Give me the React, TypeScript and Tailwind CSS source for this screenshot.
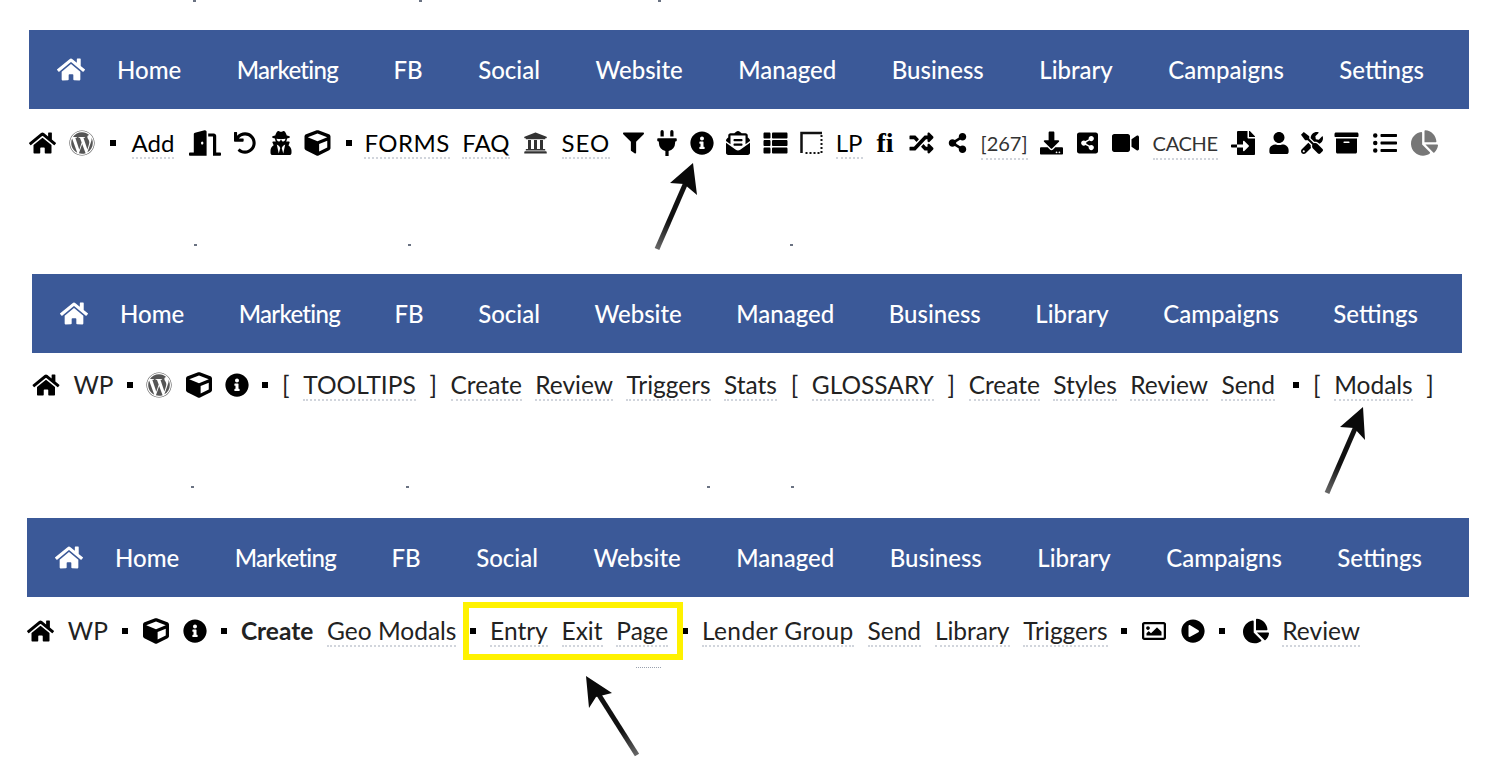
import React from "react";
import { FaArchive, FaChartPie, FaCube, FaDoorOpen, FaDownload, FaEnvelopeOpenText, FaFileImport, FaFilter, FaHome, FaInfoCircle, FaListUl, FaPlayCircle, FaPlug, FaRandom, FaRegImage, FaShareAlt, FaShareAltSquare, FaThList, FaTools, FaUndo, FaUniversity, FaUser, FaUserSecret, FaVideo, FaWordpress } from "react-icons/fa";

const navItems = ["Home", "Marketing", "FB", "Social", "Website", "Managed", "Business", "Library", "Campaigns", "Settings"];

const NavBar = ({ className, gap }: { className: string; gap: string }) => (
  <nav className={`flex h-[79px] shrink-0 items-center gap-[32px] bg-[#3b5998] pl-7 text-[24px] font-medium text-white ${className}`}>
    <FaHome className="h-[27px] w-[28px] shrink-0" />
    <div className={`flex items-center ${gap}`}>
      {navItems.map((item) => (
        <span key={item} className={item === "Marketing" ? "tracking-[-0.7px]" : ""}>
          {item}
        </span>
      ))}
    </div>
  </nav>
);

const Lnk = ({ children, className = "" }: { children: React.ReactNode; className?: string }) => (
  <span className={`shrink-0 border-b-2 border-dotted border-gray-300 leading-[29px] ${className}`}>{children}</span>
);

const Dot = ({ className = "" }: { className?: string }) => <span className={`h-[6px] w-[6px] shrink-0 bg-black ${className}`} />;

const Bracket = ({ children }: { children: React.ReactNode }) => <span className="w-2 shrink-0 text-center">{children}</span>;

// little stray marks left over from the screenshot crop
const Speck = ({ className }: { className: string }) => <span className={`absolute h-[2px] w-[3px] bg-gray-500 ${className}`} />;

const Arrow = ({ className, id, d, head, from, to }: { className: string; id: string; d: string; head: string; from: number[]; to: number[] }) => (
  <svg className={`absolute ${className}`} width="60" height="100" viewBox="0 0 60 100">
    <defs>
      <linearGradient id={id} gradientUnits="userSpaceOnUse" x1={from[0]} y1={from[1]} x2={to[0]} y2={to[1]}>
        <stop offset="0" stopColor="#666" />
        <stop offset="0.4" stopColor="#111" />
      </linearGradient>
    </defs>
    <path d={d} stroke={`url(#${id})`} strokeWidth="5" fill="none" />
    <path d={head} fill="#0a0a0a" />
  </svg>
);

export default function App() {
  return (
    <div className="relative flex h-[765px] w-[1500px] flex-col overflow-hidden bg-white font-['Lato','Open_Sans',sans-serif] text-[#222]">
      <NavBar className="ml-[29px] mr-[31px] mt-[30px]" gap="gap-x-[55.5px]" />
      <div className="ml-[29px] mt-[19px] flex h-[30px] items-center gap-[12.5px] text-[24px] text-black">
        <FaHome className="h-6 w-[27px] shrink-0" />
        <FaWordpress className="h-[26px] w-[26px] shrink-0 text-[#555]" />
        <Dot className="ml-[3px]" />
        <Lnk className="ml-[3px]">Add</Lnk>
        <FaDoorOpen className="ml-[2px] h-[26px] w-[32px] shrink-0" />
        <FaUndo className="h-[22px] w-6 shrink-0" />
        <FaUserSecret className="h-6 w-[22px] shrink-0" />
        <FaCube className="h-[26px] w-[27px] shrink-0" />
        <Dot className="ml-[2px]" />
        <Lnk><span className="tracking-[0.5px]">FORMS</span></Lnk>
        <Lnk>FAQ</Lnk>
        <FaUniversity className="ml-[1px] h-6 w-[25px] shrink-0 text-[#333]" />
        <Lnk className="ml-[1px]"><span className="tracking-[1px]">SEO</span></Lnk>
        <FaFilter className="h-[22px] w-[21px] shrink-0" />
        <FaPlug className="ml-[1px] h-[26px] w-[20px] shrink-0" />
        <FaInfoCircle className="h-6 w-6 shrink-0" />
        <FaEnvelopeOpenText className="h-6 w-6 shrink-0" />
        <FaThList className="h-6 w-[25px] shrink-0" />
        <svg className="h-6 w-[23px] shrink-0" viewBox="0 0 23 24" fill="none" stroke="#111">
          <path d="M1.5 22V2H22" strokeWidth="2.5" />
          <path d="M21.5 4V22H4" strokeWidth="2" strokeDasharray="2 2" />
        </svg>
        <Lnk>LP</Lnk>
        <span className="w-5 shrink-0 text-center font-['Liberation_Serif',serif] text-[28px] font-bold leading-none">fi</span>
        <FaRandom className="h-6 w-[27px] shrink-0" />
        <FaShareAlt className="h-5 w-[21px] shrink-0" />
        <Lnk><span className="text-[20px] text-[#333]">[267]</span></Lnk>
        <FaDownload className="h-6 w-[23px] shrink-0" />
        <FaShareAltSquare className="h-6 w-[23px] shrink-0" />
        <FaVideo className="h-6 w-[29px] shrink-0" />
        <Lnk><span className="text-[20px] tracking-[-0.3px] text-[#333]">CACHE</span></Lnk>
        <FaFileImport className="h-6 w-[26px] shrink-0" />
        <FaUser className="h-[22px] w-[20px] shrink-0" />
        <FaTools className="h-6 w-[22px] shrink-0" />
        <FaArchive className="ml-[-3px] h-6 w-[27px] shrink-0" />
        <FaListUl className="h-6 w-[26px] shrink-0" />
        <FaChartPie className="h-[26px] w-[27px] shrink-0 text-[#777]" />
      </div>

      <NavBar className="ml-[32px] mr-[38px] mt-[116px]" gap="gap-x-[54.5px]" />
      <div className="ml-[32px] mt-[17px] flex h-[30px] items-center gap-[13.4px] text-[24.5px]">
        <FaHome className="h-6 w-[28px] shrink-0 text-black" />
        <span>WP</span>
        <Dot />
        <FaWordpress className="h-[26px] w-[26px] shrink-0 text-[#555]" />
        <FaCube className="h-[26px] w-[26px] shrink-0 text-black" />
        <FaInfoCircle className="h-6 w-6 shrink-0 text-black" />
        <Dot />
        <Bracket>[</Bracket>
        <Lnk>TOOLTIPS</Lnk>
        <Bracket>]</Bracket>
        <Lnk>Create</Lnk>
        <Lnk>Review</Lnk>
        <Lnk>Triggers</Lnk>
        <Lnk>Stats</Lnk>
        <Bracket>[</Bracket>
        <Lnk>GLOSSARY</Lnk>
        <Bracket>]</Bracket>
        <Lnk>Create</Lnk>
        <Lnk>Styles</Lnk>
        <Lnk>Review</Lnk>
        <Lnk>Send</Lnk>
        <Dot className="ml-[5px]" />
        <Bracket>[</Bracket>
        <Lnk>Modals</Lnk>
        <Bracket>]</Bracket>
      </div>

      <NavBar className="ml-[27px] mr-[31px] mt-[118px]" gap="gap-x-[55.5px]" />
      <div className="ml-[27px] mt-[19px] flex h-[30px] items-center gap-[13.8px] text-[24.5px]">
        <FaHome className="h-6 w-[27px] shrink-0 text-black" />
        <span>WP</span>
        <Dot />
        <FaCube className="ml-[2px] h-[26px] w-[26px] shrink-0 text-black" />
        <FaInfoCircle className="h-6 w-6 shrink-0 text-black" />
        <Dot />
        <span className="font-bold">Create</span>
        <Lnk>Geo Modals</Lnk>
        <Dot />
        <Lnk>Entry</Lnk>
        <Lnk>Exit</Lnk>
        <Lnk>Page</Lnk>
        <Dot />
        <Lnk><span className="tracking-[0.4px]">Lender Group</span></Lnk>
        <Lnk>Send</Lnk>
        <Lnk>Library</Lnk>
        <Lnk>Triggers</Lnk>
        <Dot />
        <FaRegImage className="h-6 w-[26px] shrink-0 text-black" />
        <FaPlayCircle className="h-6 w-6 shrink-0 text-black" />
        <Dot />
        <FaChartPie className="ml-[4px] h-[26px] w-[26px] shrink-0 text-black" />
        <Lnk>Review</Lnk>
      </div>

      {/* highlight box and the hand-drawn arrows sit over the rows */}
      <div className="absolute left-[463px] top-[602px] h-[58px] w-[220px] border-[6px] border-[#fff200]" />
      <Arrow className="left-[645px] top-[160px]" id="a1" from={[12, 88]} to={[42, 20]} d="M12 89 L42 20" head="M48 3 L25 23 L39 24 L52 35 Z" />
      <Arrow className="left-[1315px] top-[404px]" id="a2" from={[12, 88]} to={[42, 20]} d="M12 89 L42 20" head="M48 3 L25 23 L39 24 L50 36 Z" />
      <Arrow className="left-[585px] top-[670px]" id="a3" from={[52, 84]} to={[14, 25]} d="M52 85 L14 25" head="M1 6 L4 38 L11 27 L27 23 Z" />

      <Speck className="left-[193px] top-0" />
      <Speck className="left-[419px] top-0" />
      <Speck className="left-[658px] top-0" />
      <Speck className="left-[194px] top-[244px]" />
      <Speck className="left-[408px] top-[244px]" />
      <Speck className="left-[790px] top-[244px]" />
      <Speck className="left-[191px] top-[486px]" />
      <Speck className="left-[406px] top-[486px]" />
      <Speck className="left-[707px] top-[486px]" />
      <Speck className="left-[791px] top-[486px]" />
      <span className="absolute left-[636px] top-[667px] w-[25px] border-t border-dotted border-gray-400" />
    </div>
  );
}
